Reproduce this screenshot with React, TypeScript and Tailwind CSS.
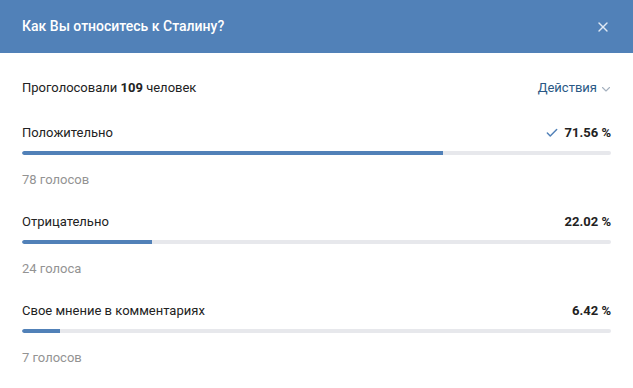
import { Check, X } from 'lucide-react'

interface Answer {
  label: string;
  percent: number;
  votes: string;
  mine?: boolean;
}

const answers: Answer[] = [
  { label: 'Положительно', percent: 71.56, votes: '78 голосов', mine: true },
  { label: 'Отрицательно', percent: 22.02, votes: '24 голоса' },
  { label: 'Свое мнение в комментариях', percent: 6.42, votes: '7 голосов' },
]

export default function App() {
  return (
    <div className="w-[633px] h-[388px] bg-white overflow-hidden" style={{ fontFamily: 'Roboto, "Liberation Sans", sans-serif' }}>
      <div className="h-[53px] bg-[#5181b8] flex items-center justify-between pl-[22px] pr-[22px]">
        <span className="text-white text-[14px] font-medium">Как Вы относитесь к Сталину?</span>
        <X className="w-[16px] h-[16px] text-[#e0e9f4]" strokeWidth={2} />
      </div>
      <div className="px-[22px] pt-[25px]">
        <div className="flex items-center justify-between h-[20px] text-[13px] text-[#222]">
          <span>
            Проголосовали <b className="font-bold">109</b> человек
          </span>
          <span className="flex items-center gap-[4px] text-[#2a5885]">
            Действия
            <svg width="10" height="6" viewBox="0 0 10 6" className="mt-[1px]">
              <path d="M1.5 1.5l3.5 3.5 3.5-3.5" fill="none" stroke="#a5b1bf" strokeWidth="1.1" strokeLinecap="round" strokeLinejoin="round" />
            </svg>
          </span>
        </div>
        <div className="mt-[26px]">
          {answers.map((a) => (
            <div key={a.label} className="mb-[24px]">
              <div className="flex items-center justify-between h-[18px] text-[13px] text-[#222]">
                <span>{a.label}</span>
                <span className="flex items-center gap-[6px] font-bold">
                  {a.mine && <Check className="w-[14px] h-[14px] text-[#5181b8]" strokeWidth={2.5} />}
                  {a.percent.toFixed(2)} %
                </span>
              </div>
              <div className="mt-[9px] h-[4px] rounded-full bg-[#e7e8ec] overflow-hidden">
                <div className="h-full bg-[#5181b8] rounded-l-full" style={{ width: `${a.percent}%` }} />
              </div>
              <div className="mt-[16px] h-[18px] flex items-center text-[13px] text-[#939393]">{a.votes}</div>
            </div>
          ))}
        </div>
      </div>
    </div>
  )
}
